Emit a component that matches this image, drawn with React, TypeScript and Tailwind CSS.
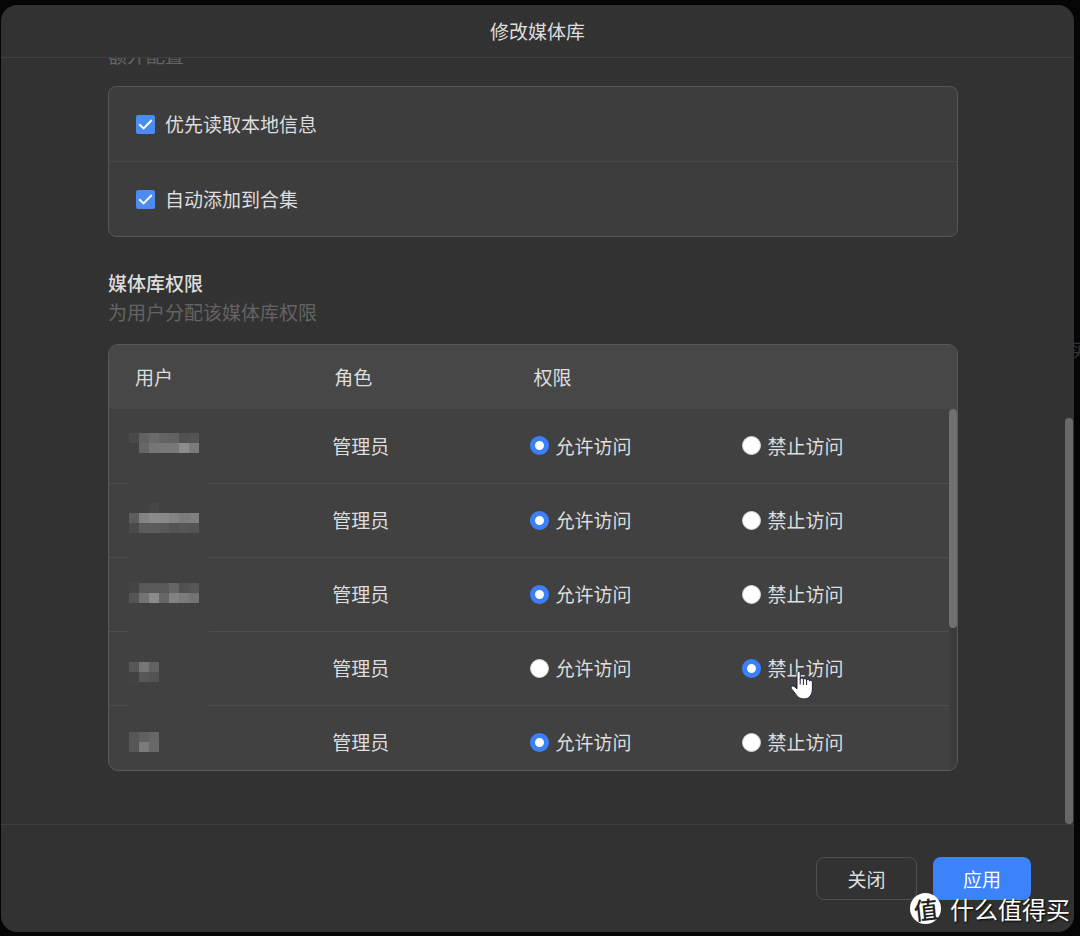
import { useState } from "react";

const FONT =
  "font-['Noto_Sans_CJK_SC','Liberation_Sans',sans-serif] text-[19px] leading-[28px]";

type Tile = [x: number, y: number, fill: string];

interface Member {
  id: string;
  role: string;
  allowed: boolean;
  tiles: Tile[];
}

function line(x: number, y: number, fills: string[]): Tile[] {
  return fills.map((fill, i) => [x + i * 10, y, fill]);
}

const MEMBERS: Member[] = [
  {
    id: "m1",
    role: "管理员",
    allowed: true,
    tiles: [
      ...line(0, 24, ["#494949", "#626262", "#6a6a6a", "#636363", "#626262", "#515151", "#545454"]),
      ...line(10, 34, ["#666666", "#767676", "#777777", "#777777", "#8c8c8c", "#7b7b7b"]),
    ],
  },
  {
    id: "m2",
    role: "管理员",
    allowed: true,
    tiles: [
      ...line(20, 19, ["#464646"]),
      ...line(0, 29, ["#5d5d5d", "#828282", "#8a8a8a", "#898989", "#838383", "#7c7c7c", "#7f7f7f"]),
      ...line(0, 39, ["#4a4a4a", "#5b5b5b", "#5b5b5b", "#595959", "#535353", "#565656", "#545454"]),
    ],
  },
  {
    id: "m3",
    role: "管理员",
    allowed: true,
    tiles: [
      ...line(0, 25, ["#454545", "#595959", "#5a5a5a", "#595959", "#656565", "#515151", "#565656"]),
      ...line(0, 35, ["#555555", "#737373", "#8b8b8b", "#666666", "#828282", "#7b7b7b", "#747474"]),
    ],
  },
  {
    id: "m4",
    role: "管理员",
    allowed: false,
    tiles: [
      ...line(0, 30, ["#565656", "#767676", "#626262"]),
      ...line(0, 40, ["#434343", "#575757", "#535353"]),
    ],
  },
  {
    id: "m5",
    role: "管理员",
    allowed: true,
    tiles: [
      ...line(0, 26, ["#565656", "#606060", "#676767"]),
      ...line(0, 36, ["#565656", "#7b7b7b", "#696969"]),
    ],
  },
];

function CheckRow({ label }: { label: string }) {
  return (
    <label className="flex h-[75px] items-center gap-[10px] border-b border-[#484848] pl-[27px] last:h-[74px] last:border-b-0">
      <span className="relative flex size-[19px]">
        <input
          type="checkbox"
          defaultChecked
          className="peer size-[19px] appearance-none rounded-[2px] bg-[#555] checked:bg-[#4a8cf0]"
        />
        <svg
          viewBox="0 0 19 19"
          className="pointer-events-none absolute inset-0 hidden size-[19px] peer-checked:block"
          fill="none"
          stroke="#fff"
          strokeWidth="1.9"
        >
          <path d="M3.2 9.2 7.6 13.4 15.8 5" />
        </svg>
      </span>
      <span>{label}</span>
    </label>
  );
}

function Choice({
  name,
  label,
  checked,
  onSelect,
}: {
  name: string;
  label: string;
  checked: boolean;
  onSelect: () => void;
}) {
  return (
    <label className="flex items-center gap-[7px]">
      <input
        type="radio"
        name={name}
        checked={checked}
        onChange={onSelect}
        className="size-[19px] shrink-0 appearance-none rounded-full border border-[#d4d4d4] bg-white checked:border-[5px] checked:border-[#3b7ffa]"
      />
      <span>{label}</span>
    </label>
  );
}

function MemberRow({ member }: { member: Member }) {
  const [allowed, setAllowed] = useState(member.allowed);
  return (
    <tr className="h-[74px] border-b border-[#4d4d4d]">
      <td className="relative p-0">
        <svg
          viewBox="0 0 80 75"
          shapeRendering="crispEdges"
          className="absolute top-0 left-5 h-[75px] w-20"
        >
          <rect width="80" height="75" fill="#414141" />
          {member.tiles.map(([x, y, fill]) => (
            <rect key={`${x}-${y}`} x={x} y={y} width="10" height="10" fill={fill} />
          ))}
        </svg>
      </td>
      <td className="p-0 pl-6">{member.role}</td>
      <td className="p-0 pl-[22px]">
        <Choice name={member.id} label="允许访问" checked={allowed} onSelect={() => setAllowed(true)} />
      </td>
      <td className="p-0 pl-[22px]">
        <span className="relative block">
          <Choice name={member.id} label="禁止访问" checked={!allowed} onSelect={() => setAllowed(false)} />
          {member.id === "m4" && (
            <svg
              viewBox="0 0 24 30"
              className="pointer-events-none absolute top-4 left-[48px] h-[30px] w-6"
              fill="#fff"
              stroke="#20203a"
              strokeWidth="1"
              strokeLinejoin="round"
            >
              <path d="M7 3.2C7 .6 10.2.6 10.2 3.2V9.4C10.4 7.6 13.2 7.6 13.4 9.6 13.8 8 16.4 8.2 16.6 10.2 17.2 8.8 19.4 9 19.6 11 20.4 9.8 22.4 10.2 22.4 12.4V19C22.4 25 19 29 14 29 9.5 29 7.2 26.6 5.2 23.4L1.2 18.4C.4 16.6 2.4 15.2 4.2 16.4L7 18.8Z" />
              <path d="M10.2 9V14.5M13.4 9.5V15M16.6 10V15" fill="none" />
            </svg>
          )}
        </span>
      </td>
    </tr>
  );
}

export default function App() {
  return (
    <div className={`relative flex h-screen min-h-[600px] overflow-hidden bg-[#050507] pt-[5px] pr-[6px] pb-1 pl-px text-[#dedede] ${FONT}`}>
      <span aria-hidden="true" className="absolute top-[336px] -right-2 text-[#333]">
        买
      </span>
      <section
        role="dialog"
        aria-labelledby="title"
        className="relative flex min-w-0 flex-1 flex-col overflow-hidden rounded-2xl bg-[#323232]"
      >
        <header className="flex h-[53px] shrink-0 items-center justify-center border-b border-[#3f3f3f]">
          <h1 id="title">修改媒体库</h1>
        </header>

        <div className="flex min-h-0 flex-1">
          <main className="flex min-w-0 flex-1 flex-col justify-end overflow-hidden px-[107px] pb-[53px]">
            <p className="mb-[17px] shrink-0 text-[#646464]">额外配置</p>
            <div className="shrink-0 rounded-lg border border-[#565656] bg-[#3d3d3d]">
              <CheckRow label="优先读取本地信息" />
              <CheckRow label="自动添加到合集" />
            </div>

            <h2 className="mt-8 shrink-0 font-medium">媒体库权限</h2>
            <p className="mt-px mb-[18px] shrink-0 text-[#646464]">为用户分配该媒体库权限</p>

            <div className="relative h-[427px] shrink-0 overflow-hidden rounded-[10px] border border-[#5a5a5a] bg-[#414141]">
              <table className="w-full table-fixed border-collapse text-left">
                <colgroup>
                  <col className="w-[23.5%]" />
                  <col className="w-[23.5%]" />
                  <col className="w-[25%]" />
                  <col className="w-[28%]" />
                </colgroup>
                <thead>
                  <tr className="h-[64px] bg-[#474747]">
                    <th className="p-0 pl-[26px] font-normal">用户</th>
                    <th className="p-0 pl-[26px] font-normal">角色</th>
                    <th colSpan={2} className="p-0 pl-[26px] font-normal">
                      权限
                    </th>
                  </tr>
                </thead>
                <tbody>
                  {MEMBERS.map((member) => (
                    <MemberRow key={member.id} member={member} />
                  ))}
                </tbody>
              </table>
              <div className="absolute top-[64px] right-0 bottom-0 w-2 bg-[#3c3c3c]">
                <div className="h-[219px] rounded-full bg-[#707070]" />
              </div>
            </div>
          </main>
          <div className="flex w-[9px] shrink-0 flex-col justify-end">
            <div className="h-[53%] w-2 rounded-full bg-[#686868]" />
          </div>
        </div>

        <footer className="flex h-[108px] shrink-0 items-center justify-end gap-4 border-t border-[#3f3f3f] pr-[43px]">
          <button type="button" className="h-[43px] w-[101px] rounded-lg border border-[#505050]">
            关闭
          </button>
          <button type="button" className="h-[43px] w-[98px] rounded-lg bg-[#3c82f8] text-white">
            应用
          </button>
        </footer>
      </section>

      <div className="absolute right-[10px] bottom-3 flex items-center gap-[9px] text-[24px] leading-[30px] text-white [text-shadow:1px_1px_2px_#000]">
        <span className="flex size-[31px] items-center justify-center rounded-full bg-white text-[24px] font-medium text-[#222] [text-shadow:none]">
          <span className="-rotate-6">值</span>
        </span>
        <span>什么值得买</span>
      </div>
    </div>
  );
}
